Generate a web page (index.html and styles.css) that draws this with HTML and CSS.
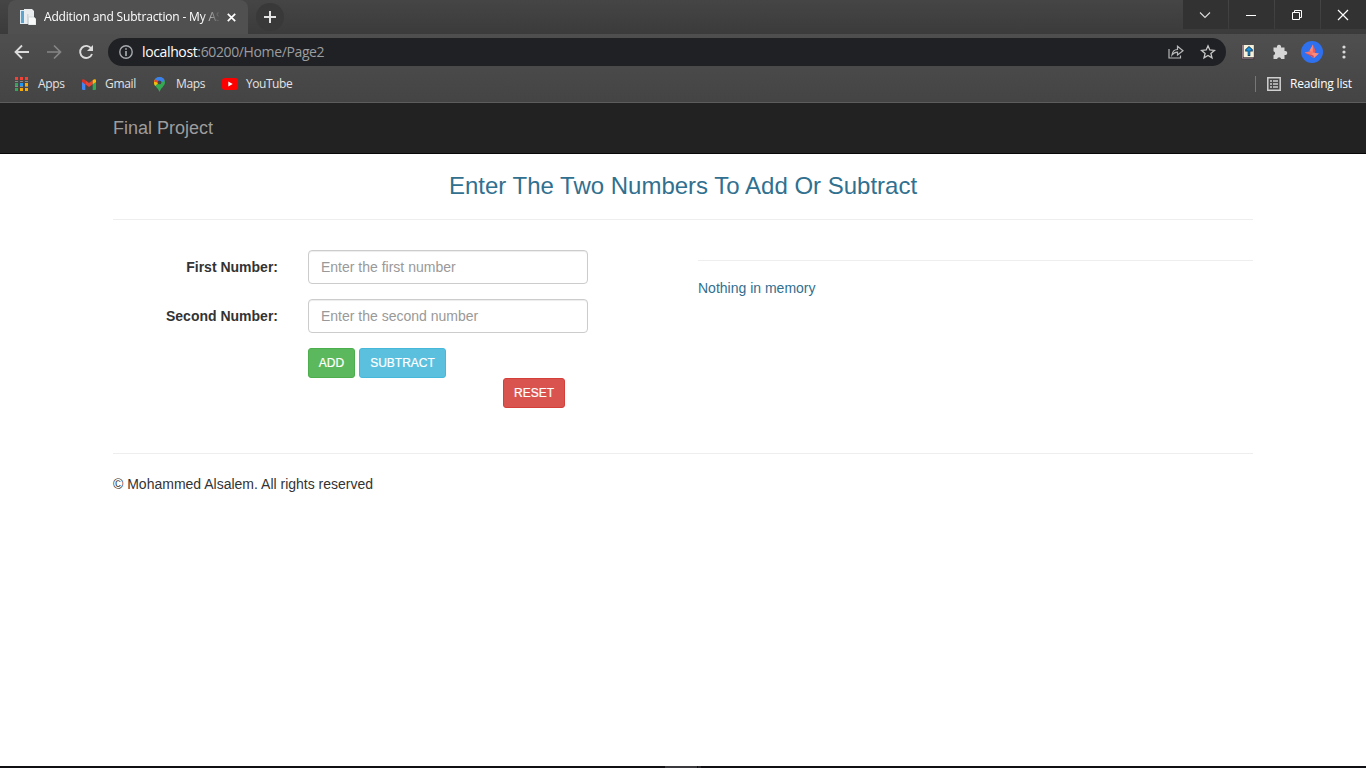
FILE: index.html
```html
<!DOCTYPE html>
<html lang="en">
<head>
<meta charset="utf-8">
<title>Addition and Subtraction</title>
<link rel="stylesheet" href="styles.css">
</head>
<body>
<div class="browser">
  <div class="tabstrip">
    <div class="tab">
      <svg class="favicon" width="16" height="16" viewBox="0 0 16 16"><path d="M0 1h6v14H0z" fill="#dce9f0"/><path d="M1 2h3v12H1z" fill="#5ea3cc"/><path d="M4 0h8l2 2v13H4z" fill="#e9edef"/><path d="M7 5h1.500v10H7z" fill="#cfd5d8"/><path d="M8.500 8h5.500l2 2v6H8.500z" fill="#f8f9f9" stroke="#c4ccd0" stroke-width=".6"/></svg>
      <span class="tab-title">Addition and Subtraction - My AS</span>
      <svg class="tab-close" width="9" height="9" viewBox="0 0 9 9"><path d="M.8.8l7.400 7.400M8.200.8L.8 8.200" stroke="#fff" stroke-width="1.700"/></svg>
    </div>
    <div class="newtab"><svg width="12" height="12" viewBox="0 0 12 12"><path d="M6 0v12M0 6h12" stroke="#e4e4e4" stroke-width="2"/></svg></div>
    <div class="controls">
      <div class="control"><svg width="12" height="12" viewBox="0 0 12 12"><path d="M1 3.500l5 5 5-5" fill="none" stroke="#ddd" stroke-width="1.100"/></svg></div>
      <div class="control"><svg width="12" height="12" viewBox="0 0 12 12"><path d="M1 6.500h10" stroke="#fff"/></svg></div>
      <div class="control"><svg width="12" height="12" viewBox="0 0 12 12"><path d="M1.500 3.500h7v7h-7zM3.500 3.500v-2h7v7h-2" fill="none" stroke="#fff"/></svg></div>
      <div class="control"><svg width="12" height="12" viewBox="0 0 12 12"><path d="M1 1l10 10M11 1L1 11" stroke="#fff" stroke-width="1.200"/></svg></div>
    </div>
  </div>
  <div class="toolbar">
    <svg class="nav" width="16" height="16" viewBox="0 0 16 16"><path d="M15 8H2M8 1.500L1.500 8 8 14.500" fill="none" stroke="#dcdcdc" stroke-width="1.800"/></svg>
    <svg class="nav" width="16" height="16" viewBox="0 0 16 16"><path d="M1 8h13M8 1.500L14.500 8 8 14.500" fill="none" stroke="#858585" stroke-width="1.700"/></svg>
    <svg class="nav" width="16" height="16" viewBox="0 0 16 16"><path d="M13.300 4.500A6.100 6.100 0 1 0 14 10" fill="none" stroke="#dcdcdc" stroke-width="1.900"/><path d="M15 1v6H9z" fill="#dcdcdc"/></svg>
    <div class="omnibox">
      <svg width="14" height="14" viewBox="0 0 14 14"><circle cx="7" cy="7" r="6.200" fill="none" stroke="#a6aaae" stroke-width="1.400"/><path d="M7 6v5M7 3.200v1.600" stroke="#b6babd" stroke-width="1.500"/></svg>
      <span class="url"><b>localhost</b>:60200/Home/Page2</span>
      <svg class="share" width="16" height="14" viewBox="0 0 16 14"><path d="M1 4v9h11.500v-2.500M4 10C4.500 6 6.500 4.600 9.500 4.500V1.200L15 5.700 9.500 10V7.200C7 7.200 5.500 8 4 10z" fill="none" stroke="#b8b8ba" stroke-width="1.200"/></svg>
      <svg class="star" width="16" height="16" viewBox="0 0 16 16"><path d="M8 1.800l1.800 4.200 4.600.4-3.500 3 1.100 4.500L8 11.500l-4 2.400 1.100-4.500-3.500-3L6.200 6z" fill="none" stroke="#c8c8c8" stroke-width="1.300"/></svg>
    </div>
    <svg class="ext-book" width="14" height="16" viewBox="0 0 14 16"><path d="M.5 1h12v14H.5z" fill="#927d88"/><path d="M3 1h10v13H3z" fill="#f7f1dc"/><path d="M.5 1v14H13v-1.500H2" fill="none" stroke="#3a2f38" stroke-width=".7"/><path d="M13.200 1v14" stroke="#4b454a" stroke-width=".6"/><path d="M8 2L4.200 5.500v2h2.500V12h2.600V7.500h2.500v-2z" fill="#17435f"/><path d="M8 3L5.200 5.800v.7h2.200V11h1.200V6.500h2.200v-.7z" fill="#1b91df"/></svg>
    <svg class="puzzle" width="16" height="16" viewBox="0 0 16 16"><path d="M1.500 3.500H5a2.100 2.100 0 1 1 4 0h3.500V7a2.100 2.100 0 1 1 0 4v4H9.200a2.100 2.100 0 0 0-4.100 0H1.500v-3.700a2.100 2.100 0 0 0 0-4.100z" fill="#d6d6d6"/></svg>
    <svg class="avatar" width="22" height="22" viewBox="0 0 22 22"><circle cx="11" cy="11" r="11" fill="#2f70ef"/><path d="M12 3.500L14.500 10l-2.500 6-4-4z" fill="#e65c5f"/><path d="M12 3.500L8.500 9.500l3 5.500z" fill="#ff8874"/><path d="M3.500 11.500l7-1.500 2.500 6.500z" fill="#f5766c"/><path d="M18 12.500l-6-1-2 4 3 1.500z" fill="#ff8b79"/><path d="M4 12l8.500 2.500.5 2.500z" fill="#c64e66"/></svg>
    <svg class="dots" width="4" height="14" viewBox="0 0 4 14"><g fill="#d9d9d9"><circle cx="2" cy="2" r="1.600"/><circle cx="2" cy="7" r="1.600"/><circle cx="2" cy="12" r="1.600"/></g></svg>
  </div>
  <div class="bookmarks">
    <svg class="bm-icon apps" width="13" height="14" viewBox="0 0 13 14"><path d="M0 1.500h3M5 1.500h3M10 1.500h3" stroke="#f34235" stroke-width="3"/><path d="M0 7.500h3M0 12.500h3" stroke="#34a45a" stroke-width="3"/><path d="M5 7.500h3" stroke="#2196f3" stroke-width="3"/><path d="M10 7.500h3M5 12.500h3M10 12.500h3" stroke="#f9ab00" stroke-width="3"/><path d="M0 4.500h3M5 4.500h3M10 4.500h3M0 9.500h3M5 9.500h3M10 9.500h3" stroke="#8a8a8a"/></svg>
    <span class="bm-text bm-apps">Apps</span>
    <svg class="bm-icon gmail" width="14" height="11" viewBox="0 0 14 11"><path d="M0 2.500l3.300 2.300V11H1a1 1 0 0 1-1-1z" fill="#4285f4"/><path d="M14 2.500l-3.300 2.300V11H13a1 1 0 0 0 1-1z" fill="#34a853"/><path d="M3.300 1.200L7 4l3.700-2.800v4L7 8 3.300 5.200z" fill="#ea4335"/><path d="M0 3V1.500C0 0 1.700-.4 3.300 1.200v4z" fill="#d93025"/><path d="M14 3V1.500c0-1.500-1.700-1.900-3.300-.3v4z" fill="#fbbc04"/></svg>
    <span class="bm-text bm-gmail">Gmail</span>
    <svg class="bm-icon maps" width="11" height="15" viewBox="0 0 11 15"><path d="M0 5.500a5.500 5.500 0 0 1 11 0C11 9 7 10.500 5.500 15 4 10.500 0 9 0 5.500z" fill="#34a853"/><path d="M0 5.500C0 7 .5 8 1.200 9l4-4-4-3A5.500 5.500 0 0 0 0 5.500z" fill="#fbbc04"/><path d="M1.200 2A5.500 5.500 0 0 0 .1 4.800L3.800 5.500 5 4z" fill="#ea4335"/><path d="M1.200 2a5.500 5.500 0 0 1 9.300 1.300L7 6 4.500 4.500z" fill="#3c80ee"/><circle cx="5.500" cy="5.400" r="1.900" fill="#454545"/></svg>
    <span class="bm-text bm-maps">Maps</span>
    <svg class="bm-icon youtube" width="16" height="12" viewBox="0 0 16 12"><rect width="16" height="12" rx="3" fill="#f00"/><path d="M6.300 3.400v5.200L10.700 6z" fill="#fff"/></svg>
    <span class="bm-text bm-youtube">YouTube</span>
    <span class="divider"></span>
    <svg class="bm-icon list" width="14" height="14" viewBox="0 0 14 14"><path d="M.8.8h12.400v12.400H.8z" fill="none" stroke="#d0d0d0" stroke-width="1.500"/><path d="M3 4h2M6 4h5M3 7h2M6 7h5M3 10h2M6 10h5" stroke="#d0d0d0" stroke-width="1.500"/></svg>
    <span class="bm-text bm-list">Reading list</span>
  </div>
</div>
<nav class="navbar"><span class="brand">Final Project</span></nav>
<main class="container">
  <h3 class="title">Enter The Two Numbers To Add Or Subtract</h3>
  <div class="columns">
    <form class="form">
      <label class="label" for="first">First Number:</label>
      <input class="field" id="first" placeholder="Enter the first number">
      <label class="label" for="second">Second Number:</label>
      <input class="field" id="second" placeholder="Enter the second number">
      <div class="actions">
        <div class="row"><button class="btn add" type="button">ADD</button><button class="btn subtract" type="button">SUBTRACT</button></div>
        <button class="btn reset" type="button">RESET</button>
      </div>
    </form>
    <section class="memory">Nothing in memory</section>
  </div>
  <footer class="footer">© Mohammed Alsalem. All rights reserved</footer>
</main>
<div class="taskbar"><span class="task"></span><span class="task-stack"></span></div>
</body>
</html>
```

FILE: styles.css
```css
* { box-sizing: border-box; }
body {
  margin: 0;
  width: 1366px;
  height: 768px;
  overflow: hidden;
  display: flex;
  flex-direction: column;
  background: #fff;
  color: #333;
  font: 14px/20px "Liberation Sans", Arial, sans-serif;
}
svg { display: block; flex: none; }
.browser {
  height: 103px;
  flex: none;
  background: linear-gradient(#505050 0, #4e4e4e 40px, #444 102px);
  border-bottom: 1px solid #5d5d5d;
  font-family: "Open Sans", "Noto Sans", sans-serif;
  color: #e3e3e3;
}
.tabstrip {
  height: 34px;
  display: flex;
  background: linear-gradient(#454545, #3b3b3b);
}
.tab {
  width: 240px;
  margin-left: 8px;
  padding-left: 12px;
  display: flex;
  align-items: center;
  background: #505050;
  border-radius: 8px 8px 0 0;
}
.tab-title {
  width: 175px;
  margin-left: 8px;
  white-space: nowrap;
  font-size: 12px;
  letter-spacing: -0.17px;
  color: #fff;
  -webkit-mask-image: linear-gradient(90deg, #000 158px, transparent 176px);
  mask-image: linear-gradient(90deg, #000 158px, transparent 176px);
}
.tab-close { margin-left: 8px; }
.newtab {
  width: 28px;
  height: 28px;
  margin: 3px 0 0 8px;
  display: grid;
  place-items: center;
  border-radius: 50%;
  background: #393939;
}
.controls { display: flex; gap: 1px; height: 29px; margin-left: auto; }
.control { width: 45px; display: grid; place-items: center; padding-right: 2px; background: #323232; }
.toolbar { height: 36px; display: flex; align-items: center; padding-left: 14px; }
.nav { margin-right: 16px; }
.omnibox {
  width: 1118px;
  height: 28px;
  margin-left: -2px;
  padding: 0 10px 0 11px;
  display: flex;
  align-items: center;
  background: #202124;
  border-radius: 14px;
}
.url { margin-left: 9px; font-size: 14px; letter-spacing: -0.37px; color: #9b9da0; }
.url b { font-weight: 400; color: #fff; }
.share { margin-left: auto; }
.star { margin-left: 16px; }
.ext-book { margin-left: 15px; }
.puzzle { margin-left: 17px; }
.avatar { margin-left: 13px; }
.dots { margin-left: 19px; }
.bookmarks { height: 28px; display: flex; align-items: center; padding-left: 15px; }
.bm-text { font-size: 12px; line-height: 20px; white-space: nowrap; margin-left: 10px; }
.bm-apps { width: 27px; letter-spacing: -0.35px; }
.gmail { margin-left: 17px; }
.bm-gmail { margin-left: 9px; width: 31px; letter-spacing: -0.3px; }
.maps { margin-left: 18px; }
.bm-maps { margin-left: 11px; width: 29px; letter-spacing: -0.35px; }
.youtube { margin-left: 17px; }
.bm-youtube { margin-left: 8px; letter-spacing: -0.45px; }
.divider { width: 1px; height: 16px; margin-left: auto; background: #777; }
.list { margin-left: 11px; }
.bm-list { width: 62px; margin: 0 14px 0 9px; letter-spacing: -0.2px; color: #fff; }
.navbar {
  height: 51px;
  flex: none;
  padding: 15px 113px 0;
  background: #222;
  border-bottom: 1px solid #080808;
}
.brand { display: block; font-size: 18px; line-height: 20px; color: #9d9d9d; }
.container { width: 1140px; margin: 0 auto; flex: 1; }
.title {
  margin: 0;
  height: 66px;
  padding-top: 19px;
  border-bottom: 1px solid #eee;
  text-align: center;
  font-size: 24px;
  line-height: 26px;
  font-weight: 400;
  color: #31708f;
}
.columns { height: 234px; display: flex; justify-content: space-between; padding-top: 30px; border-bottom: 1px solid #eee; }
.form {
  display: grid;
  grid-template-columns: 165px 280px;
  grid-auto-rows: 34px;
  gap: 15px 30px;
  align-items: start;
}
.label { padding-top: 7px; text-align: right; font-weight: 700; }
.field {
  width: 280px;
  height: 34px;
  padding: 6px 12px;
  border: 1px solid #ccc;
  border-radius: 4px;
  box-shadow: inset 0 1px 1px rgba(0, 0, 0, .075);
  font: inherit;
}
.field::placeholder { color: #999; }
.actions { grid-column: 2; }
.row { display: flex; gap: 4px; }
.btn {
  display: block;
  height: 30px;
  padding: 0;
  border: 1px solid;
  border-radius: 3px;
  color: #fff;
  font: 12px/18px "Liberation Sans", Arial, sans-serif;
  -webkit-text-stroke: 0.2px #fff;
}
.add { width: 47px; background: #5cb85c; border-color: #4cae4c; }
.subtract { width: 87px; background: #5bc0de; border-color: #46b8da; }
.reset { width: 62px; margin-left: 195px; background: #d9534f; border-color: #d43f3a; }
.memory { width: 555px; height: 50px; margin-top: 10px; padding-top: 17px; border-top: 1px solid #eee; color: #31708f; }
.footer { padding-top: 20px; }
.taskbar { height: 2px; flex: none; display: flex; gap: 1px; padding-left: 665px; background: #101014; }
.task { width: 32px; background: #3a3a3e; }
.task-stack { width: 3px; background: #29292d; }
```
